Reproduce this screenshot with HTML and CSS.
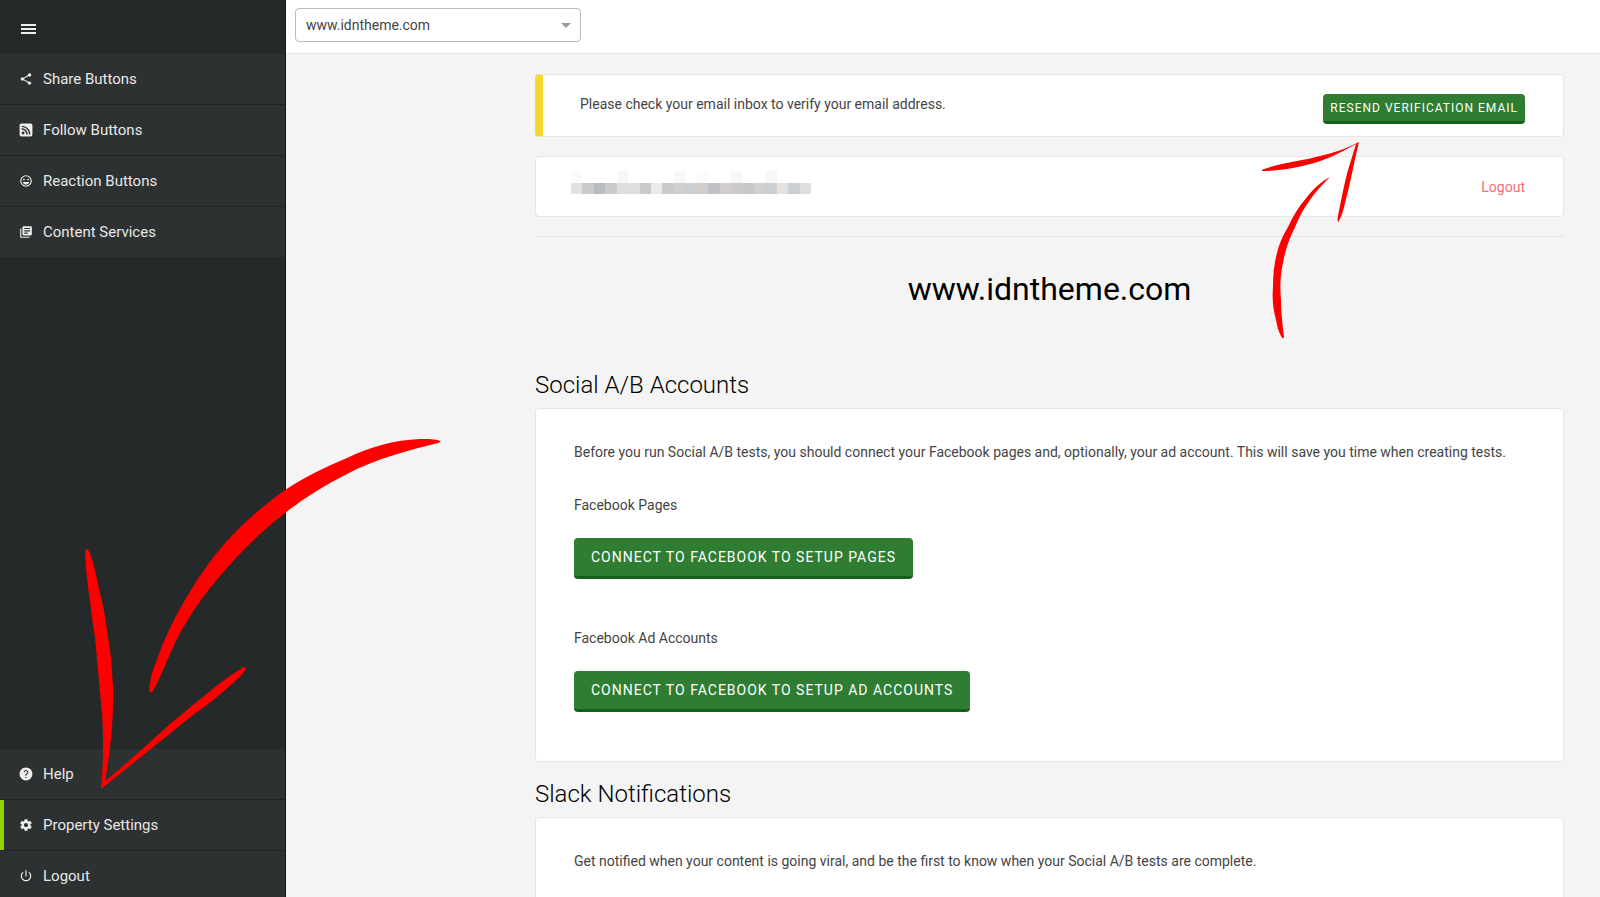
FILE: index.html
```
<!DOCTYPE html>
<html lang="en">
<head>
    <meta charset="UTF-8">
    <meta name="viewport" content="width=device-width, initial-scale=1.0">
    <title>Property Settings</title>
    <link rel="stylesheet" href="styles.css">
</head>
<body>
    <aside class="sidebar">
        <button class="menu-toggle" type="button" aria-label="Toggle menu">
            <svg viewBox="0 0 15 12"><path d="M0 2h15M0 6h15M0 10h15"/></svg>
        </button>
        <nav class="nav">
            <a href="#share">
                <svg viewBox="0 0 24 24"><path d="M18 16.080c-.76 0-1.440.3-1.960.77L8.910 12.700c.05-.23.09-.46.09-.7s-.04-.47-.09-.7l7.050-4.110c.54.5 1.250.81 2.040.81 1.660 0 3-1.340 3-3s-1.340-3-3-3-3 1.340-3 3c0 .24.04.47.09.7L8.040 9.810C7.500 9.310 6.790 9 6 9c-1.660 0-3 1.340-3 3s1.340 3 3 3c.79 0 1.500-.31 2.040-.81l7.120 4.160c-.05.21-.08.43-.08.65 0 1.610 1.310 2.920 2.920 2.920s2.920-1.310 2.920-2.920-1.310-2.920-2.920-2.920z"/></svg>
                Share Buttons
            </a>
            <a href="#follow">
                <svg viewBox="0 0 24 24"><path fill-rule="evenodd" d="M20 1H4a3 3 0 0 0-3 3v16a3 3 0 0 0 3 3h16a3 3 0 0 0 3-3V4a3 3 0 0 0-3-3zM7 14.500a2.500 2.500 0 1 1 0 5 2.500 2.500 0 0 1 0-5zM4.500 9v2.500c4.400 0 8 3.600 8 8H15C15 13.700 10.300 9 4.500 9zm0-4.500V7C11.400 7 17 12.600 17 19.500h2.500c0-8.300-6.700-15-15-15z"/></svg>
                Follow Buttons
            </a>
            <a href="#reaction">
                <svg viewBox="0 0 24 24"><path d="M12 2a10 10 0 1 0 0 20 10 10 0 0 0 0-20zm0 18a8 8 0 1 1 0-16 8 8 0 0 1 0 16zm3.500-9a1.500 1.500 0 1 0 0-3 1.500 1.500 0 0 0 0 3zm-7 0a1.500 1.500 0 1 0 0-3 1.500 1.500 0 0 0 0 3zM6.500 13.500h11c-.7 2.600-2.900 4.500-5.500 4.500s-4.800-1.900-5.500-4.500z"/></svg>
                Reaction Buttons
            </a>
            <a href="#content">
                <svg viewBox="0 0 24 24"><path d="M4 6H2v14c0 1.100.9 2 2 2h14v-2H4V6zm16-4H8c-1.100 0-2 .9-2 2v12c0 1.100.9 2 2 2h12c1.100 0 2-.9 2-2V4c0-1.100-.9-2-2-2zm-1 9H9V9h10v2zm-4 4H9v-2h6v2zm4-8H9V5h10v2z"/></svg>
                Content Services
            </a>
        </nav>
        <nav class="nav nav-bottom">
            <a href="#help">
                <svg viewBox="0 0 24 24"><path d="M12 1C5.900 1 1 5.900 1 12s4.900 11 11 11 11-4.900 11-11S18.100 1 12 1zm1 18h-2v-2h2v2zm2.070-7.750l-.9.920C13.450 12.900 13 13.500 13 15h-2v-.5c0-1.100.45-2.100 1.170-2.830l1.240-1.260c.37-.36.59-.86.59-1.410 0-1.100-.9-2-2-2s-2 .9-2 2H8c0-2.210 1.790-4 4-4s4 1.790 4 4c0 .88-.36 1.680-.93 2.250z"/></svg>
                Help
            </a>
            <a class="active" href="#settings">
                <svg viewBox="0 0 24 24"><path fill-rule="evenodd" d="M19.430 12.980c.04-.32.07-.64.07-.98s-.03-.66-.07-.98l2.110-1.650c.19-.15.24-.42.12-.64l-2-3.460c-.12-.22-.39-.3-.61-.22l-2.490 1c-.52-.4-1.080-.73-1.690-.98l-.38-2.650C14.460 2.180 14.250 2 14 2h-4c-.25 0-.46.18-.49.42l-.38 2.650c-.61.25-1.170.59-1.690.98l-2.490-1c-.23-.09-.49 0-.61.22l-2 3.460c-.13.22-.07.49.12.64l2.110 1.650c-.04.32-.07.65-.07.98s.03.66.07.98l-2.110 1.650c-.19.15-.24.42-.12.64l2 3.460c.12.22.39.3.61.22l2.490-1c.52.4 1.080.73 1.690.98l.38 2.650c.03.24.24.42.49.42h4c.25 0 .46-.18.49-.42l.38-2.650c.61-.25 1.170-.59 1.690-.98l2.490 1c.23.09.49 0 .61-.22l2-3.460c.12-.22.07-.49-.12-.64l-2.110-1.650zM12 15.500c-1.930 0-3.500-1.570-3.500-3.500s1.570-3.500 3.500-3.500 3.500 1.570 3.500 3.500-1.570 3.500-3.500 3.500z"/></svg>
                Property Settings
            </a>
            <a href="#logout">
                <svg viewBox="0 0 24 24"><path d="M13 2h-2v11h2V2zm4.830 3.170l-1.420 1.420A6.920 6.920 0 0 1 19 12a7 7 0 1 1-11.420-5.420L6.170 5.170A8.930 8.930 0 0 0 3 12a9 9 0 0 0 18 0c0-2.740-1.230-5.180-3.170-6.830z"/></svg>
                Logout
            </a>
        </nav>
    </aside>

    <main class="main">
        <header class="topbar">
            <div class="select-wrap">
                <select class="property-select" aria-label="Property">
                    <option>www.idntheme.com</option>
                </select>
            </div>
        </header>

        <div class="content">
            <section class="card alert">
                <p>Please check your email inbox to verify your email address.</p>
                <button class="btn btn-small" type="button">Resend verification email</button>
            </section>

            <section class="card account">
                <!-- masked email address -->
                <svg class="masked" viewBox="0 0 21 2" preserveAspectRatio="none" shape-rendering="crispEdges" role="img" aria-label="Hidden email">
                    <path fill="#fbfbfb" d="M0 0h1v1H0zM11 0h1v1h-1z"/>
                    <path fill="#f7f7f7" d="M4 0h1v1H4zM9 0h1v1H9zM14 0h1v1h-1zM17 0h1v1h-1z"/>
                    <path fill="#e3e2e0" d="M0 1h1v1H0zM18 1h1v1h-1z"/>
                    <path fill="#cacaca" d="M1 1h1v1H1zM6 1h1v1H6zM8 1h1v1H8zM14 1h1v1h-1z"/>
                    <path fill="#b8bcbe" d="M2 1h1v1H2z"/>
                    <path fill="#cdcbca" d="M3 1h1v1H3z"/>
                    <path fill="#dedede" d="M4 1h2v1H4zM20 1h1v1h-1z"/>
                    <path fill="#e8ebea" d="M7 1h1v1H7z"/>
                    <path fill="#d0d0d0" d="M9 1h1v1H9zM16 1h1v1h-1z"/>
                    <path fill="#cccfd1" d="M10 1h1v1h-1zM17 1h1v1h-1zM19 1h1v1h-1z"/>
                    <path fill="#d2cdcd" d="M11 1h1v1h-1zM13 1h1v1h-1z"/>
                    <path fill="#c0c2c5" d="M12 1h1v1h-1z"/>
                    <path fill="#c7c9c8" d="M15 1h1v1h-1z"/>
                </svg>
                <a class="logout" href="#logout">Logout</a>
            </section>

            <hr>

            <h1>www.idntheme.com</h1>

            <h2>Social A/B Accounts</h2>
            <section class="card panel">
                <p>Before you run Social A/B tests, you should connect your Facebook pages and, optionally, your ad account. This will save you time when creating tests.</p>
                <p>Facebook Pages</p>
                <button class="btn" type="button">Connect to Facebook to setup pages</button>
                <p>Facebook Ad Accounts</p>
                <button class="btn" type="button">Connect to Facebook to setup ad accounts</button>
            </section>

            <h2>Slack Notifications</h2>
            <section class="card panel">
                <p>Get notified when your content is going viral, and be the first to know when your Social A/B tests are complete.</p>
            </section>
        </div>
    </main>

    <!-- hand drawn arrows over the page -->
    <svg class="arrows" width="1600" height="897" viewBox="0 0 1600 897" aria-hidden="true">
        <path d="M440 441C436 439 428 439 420 439C394 440 370 447 347 458C325 467 305 477 285 490C264 505 244 522 227 541C211 559 197 579 185 600C173 621 163 641 157 660C151 673 148 688 150 692C152 694 155 688 159 679C165 666 172 648 180 633C192 612 205 593 220 576C239 553 261 532 285 513C304 498 325 485 347 474C377 458 410 450 438 443C441 442 441 441 440 441Z"/>
        <path d="M87 549C92 553 96 575 100 593C104 608 106 622 108 637C111 654 112 670 113 687C113 701 113 714 112 727C110 751 108 765 105 781C123 767 142 749 160 733C174 720 188 709 203 697C218 684 235 672 244 667Q247 667 245 670C242 675 239 678 233 683C220 695 207 705 193 715L101 789C102 777 103 765 103 753C103 736 103 719 101 703C99 681 97 659 95 637C93 625 91 612 90 600C87 582 86 568 85 553Q85 549 87 549Z"/>
        <path d="M1359 142C1353 167 1350 185 1345 203C1343 212 1341 218 1338 222Q1337 221 1338 216C1341 200 1344 185 1348 170L1356 144C1345 150 1334 156 1323 160C1304 167 1281 171 1262 171Q1261 170 1264 169C1284 162 1302 161 1320 156C1334 153 1345 149 1359 142Z"/>
        <path d="M1330 177C1323 184 1316 191 1310 200C1304 208 1299 217 1295 227C1289 239 1285 251 1283 263C1280 276 1280 288 1281 300C1281 314 1283 327 1284 337Q1283 340 1281 336C1278 331 1277 325 1276 320C1273 309 1272 298 1273 287C1273 275 1274 264 1277 253C1279 244 1283 235 1288 227C1293 216 1299 206 1307 197C1314 188 1322 181 1330 177Z"/>
    </svg>
</body>
</html>
```

FILE: styles.css
```
* {
    box-sizing: border-box;
}
body {
    margin: 0;
    display: flex;
    position: relative;
    height: 100vh;
    overflow: hidden;
    font-family: Roboto, Arial, sans-serif;
    font-size: 14px;
    line-height: 20px;
    color: #444;
    background-color: #f4f4f4;
}
p {
    margin: 0;
}

/* Sidebar */
.sidebar {
    display: flex;
    flex-direction: column;
    flex: none;
    width: 286px;
    height: calc(100% + 4px);
    background-color: #262929;
    border-right: 1px solid #111616;
}
.menu-toggle {
    height: 54px;
    flex: none;
    padding: 3px 21px 0;
    border: 0;
    background: none;
    text-align: left;
    cursor: pointer;
}
.menu-toggle svg {
    display: block;
    width: 15px;
    height: 12px;
    stroke: #eee;
    stroke-width: 2;
}
.nav a {
    display: flex;
    align-items: center;
    gap: 10px;
    height: 50px;
    padding-left: 19px;
    background-color: #2d3131;
    color: #e8e8e8;
    font-size: 15px;
    text-decoration: none;
}
.nav a + a {
    height: 51px;
    border-top: 1px solid #202424;
}
.nav a:hover {
    background-color: #353a3a;
}
.nav .active {
    box-shadow: inset 4px 0 #8fd400;
}
.nav svg {
    width: 14px;
    height: 14px;
    fill: #eee;
}
.nav-bottom {
    margin-top: auto;
}

/* Main column */
.main {
    flex: 1;
    min-width: 0;
}
.topbar {
    height: 54px;
    padding: 8px 9px;
    background-color: white;
    border-bottom: 1px solid #e6e6e6;
}
.select-wrap {
    position: relative;
    width: 286px;
}
.select-wrap::after {
    content: "";
    position: absolute;
    top: 15px;
    right: 10px;
    border: 5px solid transparent;
    border-top-color: #999;
    border-bottom: 0;
    pointer-events: none;
}
.property-select {
    width: 100%;
    height: 34px;
    padding: 0 10px;
    border: 1px solid #bbb;
    border-radius: 4px;
    background-color: white;
    color: #444;
    font: inherit;
    appearance: none;
}
.content {
    padding: 20px 36px 0 249px;
}
.card {
    background-color: white;
    border: 1px solid #e6e6e6;
    border-radius: 4px;
}
.alert, .account {
    display: flex;
    justify-content: space-between;
    margin-bottom: 19px;
    padding-right: 38px;
}
.alert {
    height: 63px;
    padding-top: 19px;
    padding-left: 37px;
    border-left: 8px solid #f4d930;
}
.account {
    height: 61px;
    padding-top: 14px;
    padding-left: 35px;
}
.masked {
    width: 240px;
    height: 23px;
}
.logout {
    padding-top: 6px;
    color: #f07078;
    text-decoration: none;
}
hr {
    margin: 0;
    border: 0;
    border-top: 1px solid #e2e2e2;
}
h1 {
    margin: 32px 0 60px;
    color: #000;
    font-size: 32px;
    font-weight: 400;
    line-height: 40px;
    text-align: center;
}
h2 {
    margin: 0 0 7px;
    color: #000;
    font-size: 24px;
    font-weight: 300;
    line-height: 32px;
}
.panel {
    margin-bottom: 16px;
    padding: 33px 38px 49px;
}
.panel p {
    margin-bottom: 23px;
}
.panel p:first-child {
    margin-bottom: 33px;
}

/* Buttons */
.btn {
    display: block;
    height: 41px;
    padding: 0 17px;
    border: 0;
    border-bottom: 3px solid #15601a;
    border-radius: 4px;
    background-color: #2e7d32;
    color: white;
    font-family: inherit;
    font-size: 14px;
    letter-spacing: 1px;
    text-transform: uppercase;
    cursor: pointer;
}
.btn:hover {
    background-color: #276b2b;
}
.btn + p {
    margin-top: 49px;
}
.btn-small {
    height: 30px;
    padding: 0 7px;
    font-size: 12px;
}

.arrows {
    position: absolute;
    top: 0;
    left: 0;
    fill: #f00;
    pointer-events: none;
}
```
